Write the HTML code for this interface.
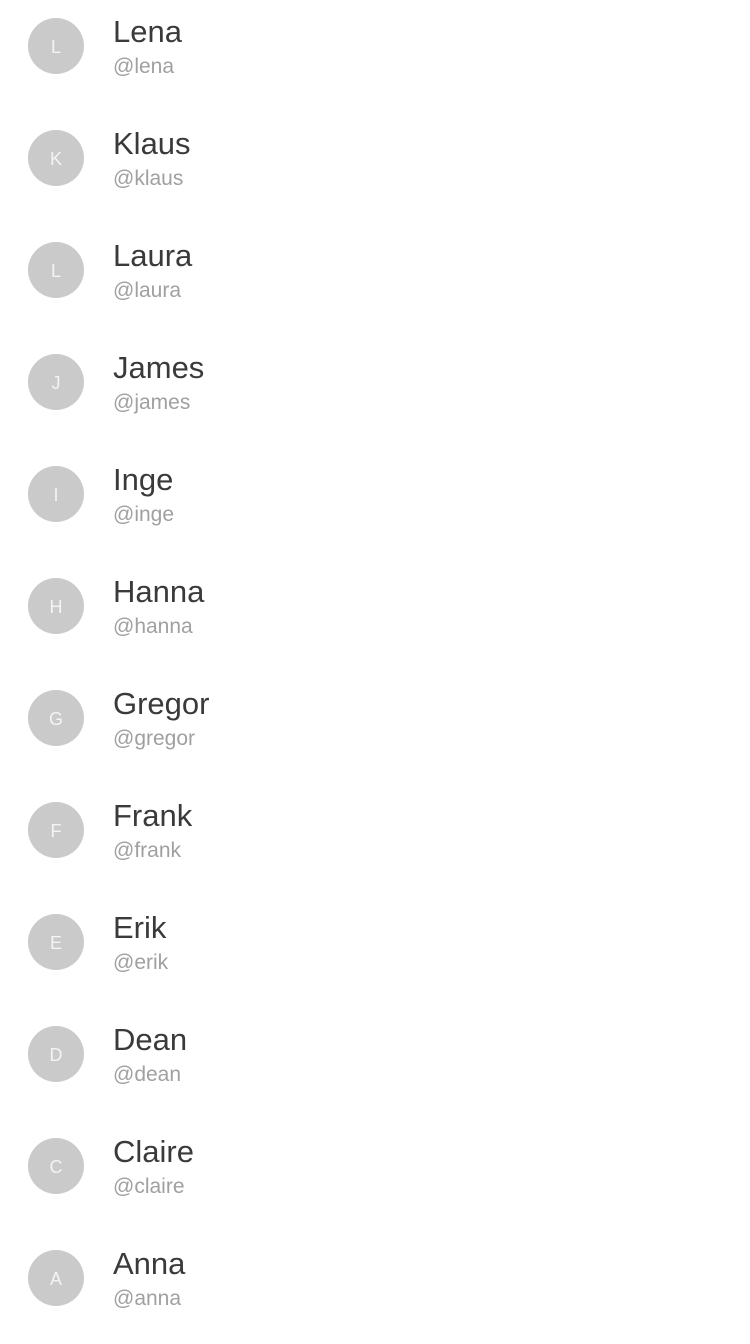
<!DOCTYPE html>
<html><head><meta charset="utf-8"><style>
body{margin:0;width:750px;height:1334px;background:#fff;font-family:"Liberation Sans",sans-serif;position:relative;overflow:hidden}
.r{position:absolute;left:0;width:750px;height:112px}
.a{position:absolute;left:28px;top:18px;width:56px;height:56px;border-radius:50%;background:#cacaca;color:#f4f4f4;font-size:18px;line-height:58px;text-align:center}
.n{position:absolute;left:113px;top:16px;font-size:31px;line-height:32px;color:#3a3a3a}
.h{position:absolute;left:113px;top:56px;font-size:21px;line-height:21px;color:#a0a0a0}
</style></head><body>
<div class="r" style="top:0"><div class="a">L</div><div class="n">Lena</div><div class="h">@lena</div></div>
<div class="r" style="top:112px"><div class="a">K</div><div class="n">Klaus</div><div class="h">@klaus</div></div>
<div class="r" style="top:224px"><div class="a">L</div><div class="n">Laura</div><div class="h">@laura</div></div>
<div class="r" style="top:336px"><div class="a">J</div><div class="n">James</div><div class="h">@james</div></div>
<div class="r" style="top:448px"><div class="a">I</div><div class="n">Inge</div><div class="h">@inge</div></div>
<div class="r" style="top:560px"><div class="a">H</div><div class="n">Hanna</div><div class="h">@hanna</div></div>
<div class="r" style="top:672px"><div class="a">G</div><div class="n">Gregor</div><div class="h">@gregor</div></div>
<div class="r" style="top:784px"><div class="a">F</div><div class="n">Frank</div><div class="h">@frank</div></div>
<div class="r" style="top:896px"><div class="a">E</div><div class="n">Erik</div><div class="h">@erik</div></div>
<div class="r" style="top:1008px"><div class="a">D</div><div class="n">Dean</div><div class="h">@dean</div></div>
<div class="r" style="top:1120px"><div class="a">C</div><div class="n">Claire</div><div class="h">@claire</div></div>
<div class="r" style="top:1232px"><div class="a">A</div><div class="n">Anna</div><div class="h">@anna</div></div>
</body></html>
